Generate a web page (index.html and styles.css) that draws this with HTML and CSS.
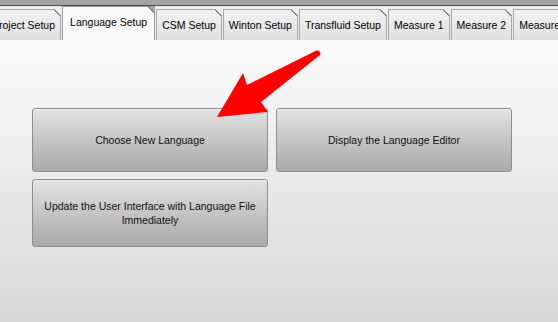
FILE: index.html
```html
<!DOCTYPE html>
<html lang="en">
<head>
  <meta charset="UTF-8">
  <title>Language Setup</title>
  <link rel="stylesheet" href="styles.css">
</head>
<body>

<div class="topbar"></div>

<div class="tabs">
  <div class="tab first">Project Setup</div>
  <div class="tab active">Language Setup</div>
  <div class="tab">CSM Setup</div>
  <div class="tab">Winton Setup</div>
  <div class="tab">Transfluid Setup</div>
  <div class="tab">Measure 1</div>
  <div class="tab">Measure 2</div>
  <div class="tab">Measure 3</div>
</div>

<div class="panel">
  <div class="buttons">
    <button class="btn">Choose New Language</button>
    <button class="btn">Display the Language Editor</button>
    <button class="btn tall">Update the User Interface with Language File Immediately</button>
  </div>

  <!-- red arrow pointing at the first button -->
  <svg class="arrow" width="558" height="322" viewBox="0 0 558 322">
    <path d="M316.5 50.5 Q320 50 320.5 54.5 L261 102 L268 112 L217 117 L243 73 L247 85 Z" fill="#ff0000"/>
  </svg>
</div>

</body>
</html>
```

FILE: styles.css
```css
body {
  margin: 0;
  font-family: "Liberation Sans", Arial, sans-serif;
  font-size: 10.5px;
  color: #111;
  height: 322px;
  overflow: hidden;
  background: #ececec;
}

.topbar {
  height: 5px;
  background: #a4a4a4;
  border-bottom: 1px solid #4a4a4a;
}

.tabs {
  display: flex;
  align-items: flex-end;
  height: 34px;
  margin-left: -14px;
  background: #efefef;
  white-space: nowrap;
}

.tab {
  position: relative;
  box-sizing: border-box;
  height: 31px;
  padding: 0 5px;
  margin-right: 1px;
  display: flex;
  align-items: center;
  background: linear-gradient(#f2f2f2, #e0e0e0);
  border: 1px solid #a8a8a8;
  border-bottom: none;
  color: #000;
}

.tab::after {
  content: "";
  position: absolute;
  top: -1px;
  right: -1px;
  width: 7px;
  height: 7px;
  background: linear-gradient(to bottom left, #efefef 46%, #8c8c8c 46%, #8c8c8c 60%, transparent 60%);
}

.tab.first {
  width: 76px;
}

.tab.active {
  height: 34px;
  padding: 0 7px 4px;
  background: #fafafa;
  border-color: #9a9a9a;
}

.tab.active::after {
  background: linear-gradient(to bottom left, #a4a4a4 46%, #8c8c8c 46%, #8c8c8c 60%, transparent 60%);
}

.panel {
  position: relative;
  height: 282px;
  background: linear-gradient(#fbfbfb, #d8d8d8);
  padding: 68px 0 0 32px;
  box-sizing: border-box;
}

.buttons {
  display: grid;
  grid-template-columns: 236px 236px;
  grid-template-rows: 64px 68px;
  gap: 7px 8px;
}

.btn {
  font-family: inherit;
  font-size: 10.5px;
  color: #111;
  border: 1px solid #8e8e8e;
  border-radius: 3px;
  background: linear-gradient(#e2e2e2, #a9a9a9);
  box-shadow: inset 0 1px 0 #efefef;
  padding: 0 4px;
  line-height: 14px;
}

.arrow {
  position: absolute;
  top: -40px;
  left: 0;
  pointer-events: none;
}
```
